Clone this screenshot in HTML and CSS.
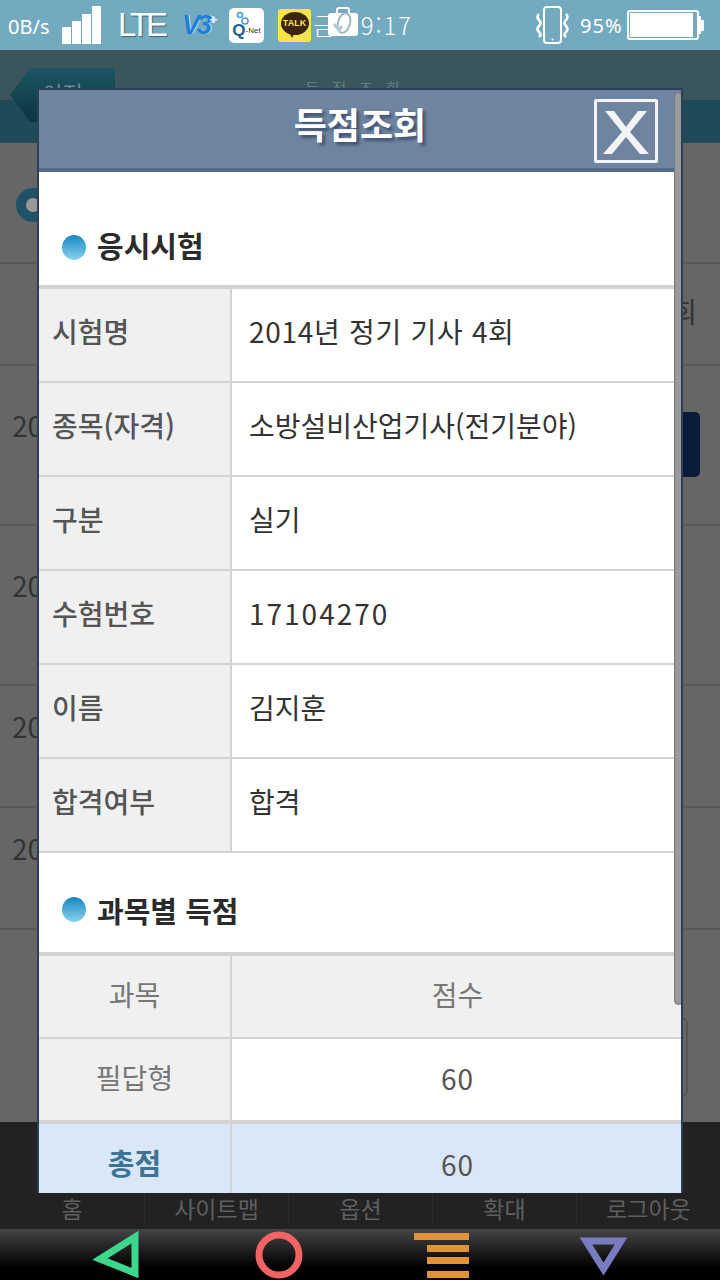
FILE: index.html
```html
<!DOCTYPE html>
<html lang="ko">
<head>
    <meta charset="UTF-8">
    <meta name="viewport" content="width=device-width, initial-scale=1.0">
    <title>득점조회</title>
    <link rel="stylesheet" href="styles.css">
</head>
<body>
    <div class="statusbar">
        <span class="speed">0B/s</span>
        <svg class="signal" width="39" height="38" viewBox="0 0 39 38">
            <rect x="0" y="21" width="9" height="17" fill="#fff"/>
            <rect x="10" y="15" width="9" height="23" fill="#fff"/>
            <rect x="20" y="8" width="9" height="30" fill="#fff"/>
            <rect x="30" y="0" width="9" height="38" fill="#fff"/>
        </svg>
        <span class="lte">LTE</span>
        <span class="v3">V3<sup>+</sup></span>
        <div class="qnet">
            <svg class="qnet-rings" width="14" height="14" viewBox="0 0 14 14">
                <circle cx="4" cy="4" r="2.500" fill="none" stroke="#4a9bd0" stroke-width="1.500"/>
                <circle cx="9" cy="10" r="3" fill="none" stroke="#4a9bd0" stroke-width="1.500"/>
            </svg>
            <b>Q</b><span>-Net</span>
        </div>
        <div class="kakao"><span>TALK</span></div>
        <div class="clock">
            금 09:17
            <svg class="case" width="30" height="30" viewBox="0 0 30 30">
                <path d="M9 7V3q0-2 2-2h8q2 0 2 2v4" fill="none" stroke="#fff" stroke-width="2"/>
                <rect x="0" y="6" width="30" height="23" rx="3" fill="#fff"/>
                <ellipse cx="16" cy="16" rx="6" ry="10" fill="none" stroke="#9db7c2" stroke-width="2" transform="rotate(15 16 16)"/>
                <path d="M6 17l5 6 3-4" fill="none" stroke="#b7c9d0" stroke-width="3"/>
            </svg>
        </div>
        <div class="status-right">
            <svg width="33" height="38" viewBox="0 0 33 38">
                <rect x="8" y="1" width="17" height="36" rx="3" fill="none" stroke="#fff" stroke-width="2"/>
                <circle cx="16.500" cy="33.500" r="1" fill="#fff"/>
                <path d="M3 8q-3 3 0 6t0 6 0 6 0 5M30 8q3 3 0 6t0 6 0 6 0 5" fill="none" stroke="#fff" stroke-width="2.500"/>
            </svg>
            <span class="percent">95%</span>
            <svg width="78" height="30" viewBox="0 0 78 30">
                <rect x="1" y="1" width="70" height="28" rx="2" fill="none" stroke="#fff" stroke-width="2"/>
                <rect x="3" y="3" width="63" height="24" fill="#fff"/>
                <path d="M71 6h3v4h3v11h-3v3h-3z" fill="#fff"/>
            </svg>
        </div>
    </div>

    <div class="page">
        <div class="page-head">
            <div class="back-btn">이전</div>
            <div class="page-title">득점조회</div>
        </div>
        <div class="page-body">
            <div class="ring"></div>
            <div class="bg-row bg-row-head"><span></span><span>회</span></div>
            <div class="bg-row bg-row-tall"><span>20</span><span class="bg-btn"></span></div>
            <div class="bg-row bg-row-tall"><span>20</span></div>
            <div class="bg-row"><span>20</span></div>
            <div class="bg-row"><span>20</span></div>
            <div class="bg-box"></div>
        </div>
    </div>

    <div class="menu">
        <a class="menu-item">홈</a>
        <a class="menu-item">사이트맵</a>
        <a class="menu-item">옵션</a>
        <a class="menu-item">확대</a>
        <a class="menu-item">로그아웃</a>
    </div>

    <div class="navbar">
        <svg width="720" height="51" viewBox="0 0 720 51">
            <path d="M100 30L135 8V44Z" fill="none" stroke="#3ed58f" stroke-width="7"/>
            <circle cx="279" cy="26" r="20" fill="none" stroke="#f26464" stroke-width="7"/>
            <rect x="414" y="4" width="55" height="7" fill="#e09437"/>
            <rect x="427" y="16" width="42" height="7" fill="#e09437"/>
            <rect x="427" y="28" width="42" height="7" fill="#e09437"/>
            <rect x="427" y="42" width="42" height="7" fill="#e09437"/>
            <path d="M586 12H621L603.500 40Z" fill="none" stroke="#7a7cc0" stroke-width="7"/>
        </svg>
    </div>

    <div class="dialog">
        <div class="dialog-head">
            <h1>득점조회</h1>
            <a class="close-btn">
                <svg width="58" height="58" viewBox="0 0 58 58">
                    <path d="M8 9H17L29 25 41 9H50L33 30 52 52H43L29 35 15 52H6L25 30Z" fill="#f2f4f7"/>
                </svg>
            </a>
        </div>

        <h2 class="section-title first"><i class="dot"></i>응시시험</h2>
        <table class="info-table">
            <tr><th>시험명</th><td class="wide">2014년 정기 기사 4회</td></tr>
            <tr><th>종목(자격)</th><td>소방설비산업기사(전기분야)</td></tr>
            <tr><th>구분</th><td>실기</td></tr>
            <tr><th>수험번호</th><td class="num">17104270</td></tr>
            <tr><th>이름</th><td>김지훈</td></tr>
            <tr><th>합격여부</th><td>합격</td></tr>
        </table>

        <h2 class="section-title"><i class="dot"></i>과목별 득점</h2>
        <table class="score-table">
            <tr class="score-head"><th>과목</th><th>점수</th></tr>
            <tr><th>필답형</th><td>60</td></tr>
            <tr class="score-total"><th>총점</th><td>60</td></tr>
        </table>

        <div class="scrollbar"></div>
    </div>
</body>
</html>
```

FILE: styles.css
```css
html, body {
    margin: 0;
    padding: 0;
}
body {
    position: relative;
    width: 720px;
    height: 1280px;
    overflow: hidden;
    font-family: "Noto Sans CJK KR", "Noto Sans", sans-serif;
    display: flex;
    flex-direction: column;
    background: #666;
}

/* status bar */
.statusbar {
    height: 50px;
    background: #73aabf;
    color: #fff;
    display: flex;
    align-items: center;
    flex-shrink: 0;
}
.speed {
    margin-left: 8px;
    width: 54px;
    font-family: "Noto Sans", sans-serif;
    font-size: 20px;
    line-height: 24px;
    padding-top: 4px;
}
.signal {
    margin-top: -1px;
}
.lte {
    margin-left: 17px;
    width: 46px;
    font-family: "Liberation Sans", sans-serif;
    font-size: 33px;
    letter-spacing: -4px;
    line-height: 40px;
    text-shadow: 1px 1px 1px #44606e;
}
.v3 {
    margin-left: 18px;
    width: 47px;
    font-family: "Liberation Sans", sans-serif;
    font-size: 27px;
    font-style: italic;
    font-weight: bold;
    letter-spacing: -3px;
    color: #1f7fd6;
    text-shadow: 1px 0 #cfe8f5;
}
.v3 sup {
    font-size: 13px;
    color: #e3f2f8;
}
.qnet {
    position: relative;
    width: 35px;
    height: 35px;
    margin-right: 14px;
    background: #fff;
    border-radius: 5px;
    display: flex;
    align-items: flex-end;
    justify-content: center;
    padding-bottom: 3px;
    box-sizing: border-box;
    font-family: "Liberation Sans", sans-serif;
    line-height: 18px;
}
.qnet-rings {
    position: absolute;
    left: 7px;
    top: 3px;
}
.qnet b {
    font-size: 17px;
    color: #1d5f9b;
}
.qnet span {
    font-size: 8px;
    color: #333;
}
.kakao {
    position: relative;
    width: 33px;
    height: 33px;
    background: #fbe44a;
    border-radius: 3px;
    display: flex;
    align-items: center;
    justify-content: center;
}
.kakao span {
    width: 28px;
    height: 23px;
    margin-top: -3px;
    border-radius: 50%;
    background: #3c2415;
    color: #fbe44a;
    font-family: "Liberation Sans", sans-serif;
    font-size: 9px;
    font-weight: bold;
    line-height: 23px;
    text-align: center;
}
.kakao::after {
    content: "";
    position: absolute;
    left: 11px;
    top: 23px;
    border-left: 3px solid transparent;
    border-right: 3px solid transparent;
    border-top: 6px solid #3c2415;
}
.clock {
    position: relative;
    margin-left: 2px;
    font-size: 24px;
    font-weight: 300;
    letter-spacing: 2px;
    white-space: nowrap;
    line-height: 30px;
}
.case {
    position: absolute;
    left: 15px;
    top: -3px;
}
.status-right {
    margin-left: auto;
    padding-right: 15px;
    display: flex;
    align-items: center;
}
.percent {
    margin-left: 11px;
    width: 47px;
    font-size: 20px;
    letter-spacing: 1px;
    font-family: "Noto Sans", sans-serif;
}

/* dimmed page behind the popup */
.page {
    height: 1072px;
    flex-shrink: 0;
    overflow: hidden;
}
.page-head {
    height: 93px;
    background: linear-gradient(#3b555c 54%, #1f4b59 54%);
    display: flex;
    padding-top: 18px;
    box-sizing: border-box;
}
.back-btn {
    width: 105px;
    height: 54px;
    margin-left: 10px;
    background: linear-gradient(#1c5563, #0b3541);
    clip-path: polygon(0 50%, 20px 0, 100% 0, 100% 100%, 20px 100%);
    color: #6d8d94;
    font-size: 22px;
    text-align: center;
    line-height: 48px;
}
.page-title {
    margin: 12px 0 0 190px;
    color: #5d7f86;
    font-size: 16px;
    line-height: 16px;
    letter-spacing: 12px;
}
.page-body {
    height: 979px;
    background: #666;
    padding-top: 45px;
    box-sizing: border-box;
    color: #333;
}
.ring {
    width: 14px;
    height: 14px;
    margin-left: 16px;
    border: 10px solid #1f5169;
    border-radius: 50%;
    background: #999;
}
.bg-row {
    height: 122px;
    box-sizing: border-box;
    border-bottom: 2px solid #5a5a5a;
    display: flex;
    justify-content: space-between;
    align-items: center;
    padding: 0 20px 40px 12px;
    font-size: 28px;
}
.bg-row-head {
    height: 104px;
    margin-top: 40px;
    border-top: 2px solid #5a5a5a;
    padding: 0 23px 6px 12px;
}
.bg-row-tall {
    height: 160px;
}
.bg-btn {
    width: 30px;
    height: 65px;
    align-self: flex-start;
    margin-top: 46px;
    background: #0a1c3a;
    border-radius: 5px;
}
.bg-box {
    width: 100px;
    height: 80px;
    margin: 87px 32px 0 auto;
    border: 2px solid #555;
    border-radius: 6px;
    box-sizing: border-box;
}

/* bottom menu */
.menu {
    height: 107px;
    background: #222;
    display: flex;
    align-items: flex-end;
    flex-shrink: 0;
}
.menu-item {
    width: 144px;
    height: 36px;
    margin-bottom: 2px;
    border-left: 1px solid #2c2c2c;
    box-sizing: border-box;
    color: #5f5f5f;
    font-size: 23px;
    line-height: 34px;
    text-align: center;
}
.menu-item:first-child {
    border-left: none;
}

/* android buttons */
.navbar {
    height: 51px;
    flex-shrink: 0;
    background: linear-gradient(#454545, #000 75%);
}
.navbar svg {
    display: block;
}

/* popup */
.dialog {
    position: absolute;
    left: 37px;
    top: 88px;
    width: 646px;
    height: 1105px;
    box-sizing: border-box;
    border: 2px solid #2c4058;
    border-bottom: none;
    background: #fff;
    overflow: hidden;
}
.dialog-head {
    height: 82px;
    background: #6f84a0;
    border-bottom: 4px solid #55698a;
    box-sizing: border-box;
    display: flex;
    align-items: center;
    justify-content: center;
    padding-bottom: 12px;
    position: relative;
}
.dialog-head h1 {
    margin: 0;
    color: #fff;
    font-size: 36px;
    font-weight: bold;
    line-height: 60px;
    text-shadow: 3px 3px 3px rgba(35, 50, 80, 0.6);
}
.close-btn {
    position: absolute;
    left: 555px;
    top: 9px;
    width: 64px;
    height: 64px;
    border: 3px solid #f2f4f7;
    box-sizing: border-box;
    border-radius: 2px;
}
.close-btn svg {
    display: block;
}
.section-title {
    height: 99px;
    margin: 0;
    padding: 14px 0 0 23px;
    box-sizing: border-box;
    display: flex;
    align-items: center;
    gap: 11px;
    font-size: 29px;
    font-weight: bold;
    color: #2b2b2b;
}
.section-title.first {
    height: 113px;
    align-items: flex-end;
    padding: 0 0 19px 23px;
}
.dot {
    width: 24px;
    height: 25px;
    border-radius: 50%;
    background: linear-gradient(#1a86bf, #86d3ee);
    flex-shrink: 0;
}
.first .dot {
    margin-bottom: 6px;
}
table {
    width: 644px;
    border-collapse: separate;
    border-spacing: 0;
    table-layout: fixed;
    border-top: 4px solid #d3d3d3;
    font-size: 28px;
}
th, td {
    padding: 0;
    box-sizing: border-box;
    border-bottom: 2px solid #d3d3d3;
    font-weight: normal;
}
th {
    width: 193px;
    background: #f0f0f0;
    border-right: 2px solid #d3d3d3;
}
.info-table tr {
    height: 94px;
}
.info-table th {
    text-align: left;
    padding: 0 0 8px 13px;
    color: #555;
    font-weight: 500;
}
.info-table td {
    padding: 0 0 8px 17px;
    color: #333;
}
.info-table td.num {
    letter-spacing: 2px;
}
.info-table td.wide {
    letter-spacing: 0.7px;
}
.score-table tr {
    height: 83px;
}
.score-table th,
.score-table td {
    text-align: center;
    color: #777;
    padding-bottom: 6px;
}
.score-table td {
    color: #555;
    letter-spacing: 1px;
    padding-bottom: 4px;
}
.score-head td,
.score-head th {
    background: #f0f0f0;
}
.score-head th:last-child {
    width: auto;
    border-right: none;
}
.score-total th,
.score-total td {
    height: 84px;
    background: #dae7f9;
    border-top: 2px solid #d3d3d3;
    border-bottom: none;
}
.score-total td {
    padding-bottom: 2px;
}
.score-total th {
    color: #3f7396;
    font-weight: bold;
    font-size: 29px;
}
.scrollbar {
    position: absolute;
    left: 635px;
    top: 2px;
    width: 9px;
    height: 913px;
    background: #9a9a9a;
    border-radius: 5px;
    border: 1px solid #777;
    box-sizing: border-box;
}
```
